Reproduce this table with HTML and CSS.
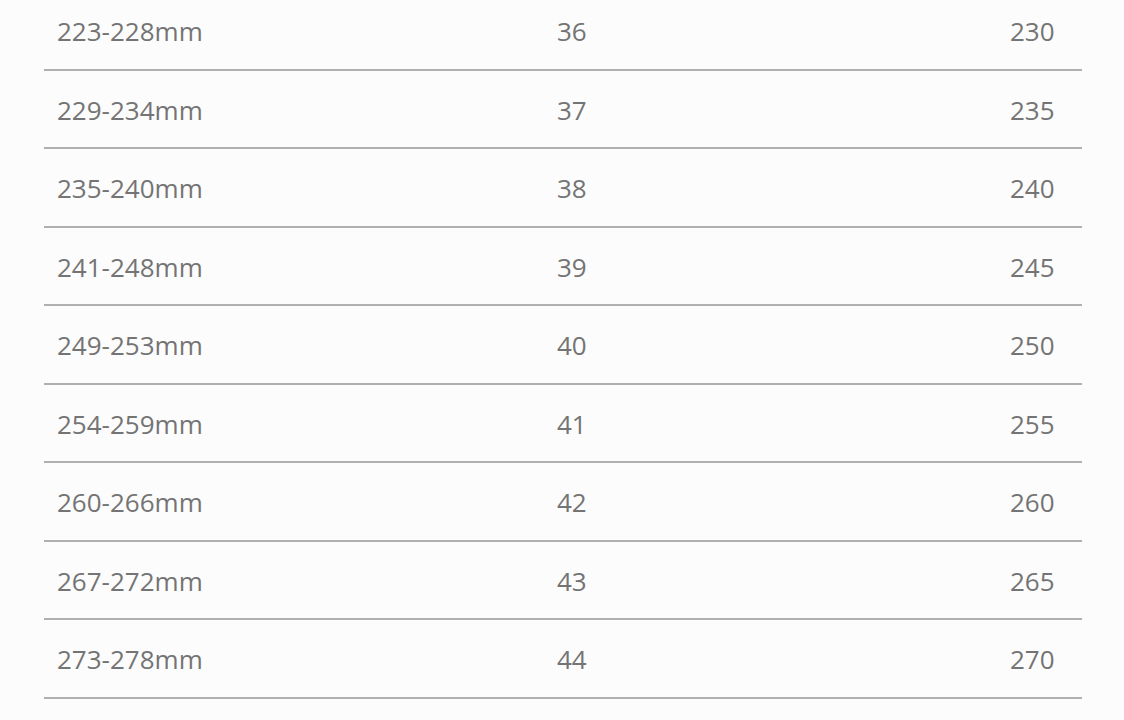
FILE: index.html
```html
<!DOCTYPE html>
<html>
<head>
<meta charset="utf-8">
<link rel="stylesheet" href="styles.css">
</head>
<body>
<div class="table">
  <div class="row"><span class="c1">223-228mm</span><span class="c2">36</span><span class="c3">230</span></div>
  <div class="row"><span class="c1">229-234mm</span><span class="c2">37</span><span class="c3">235</span></div>
  <div class="row"><span class="c1">235-240mm</span><span class="c2">38</span><span class="c3">240</span></div>
  <div class="row"><span class="c1">241-248mm</span><span class="c2">39</span><span class="c3">245</span></div>
  <div class="row"><span class="c1">249-253mm</span><span class="c2">40</span><span class="c3">250</span></div>
  <div class="row"><span class="c1">254-259mm</span><span class="c2">41</span><span class="c3">255</span></div>
  <div class="row"><span class="c1">260-266mm</span><span class="c2">42</span><span class="c3">260</span></div>
  <div class="row"><span class="c1">267-272mm</span><span class="c2">43</span><span class="c3">265</span></div>
  <div class="row"><span class="c1">273-278mm</span><span class="c2">44</span><span class="c3">270</span></div>
</div>
</body>
</html>
```
FILE: styles.css
```css
html, body {
  margin: 0;
  padding: 0;
  background: #fcfcfc;
  overflow: hidden;
}
.table {
  margin: -8px 42px 0 44px;
  font-family: "Open Sans", "Noto Sans", sans-serif;
  font-size: 26px;
  color: #747474;
}
.row {
  display: grid;
  grid-template-columns: 500px 453px 1fr;
  align-items: center;
  height: 77px;
  border-bottom: 2px solid #b0b0b0;
  padding-left: 13px;
  box-sizing: border-box;
  height: 78.5px;
}
.c1, .c2, .c3 {
  padding-top: 2px;
}
```
